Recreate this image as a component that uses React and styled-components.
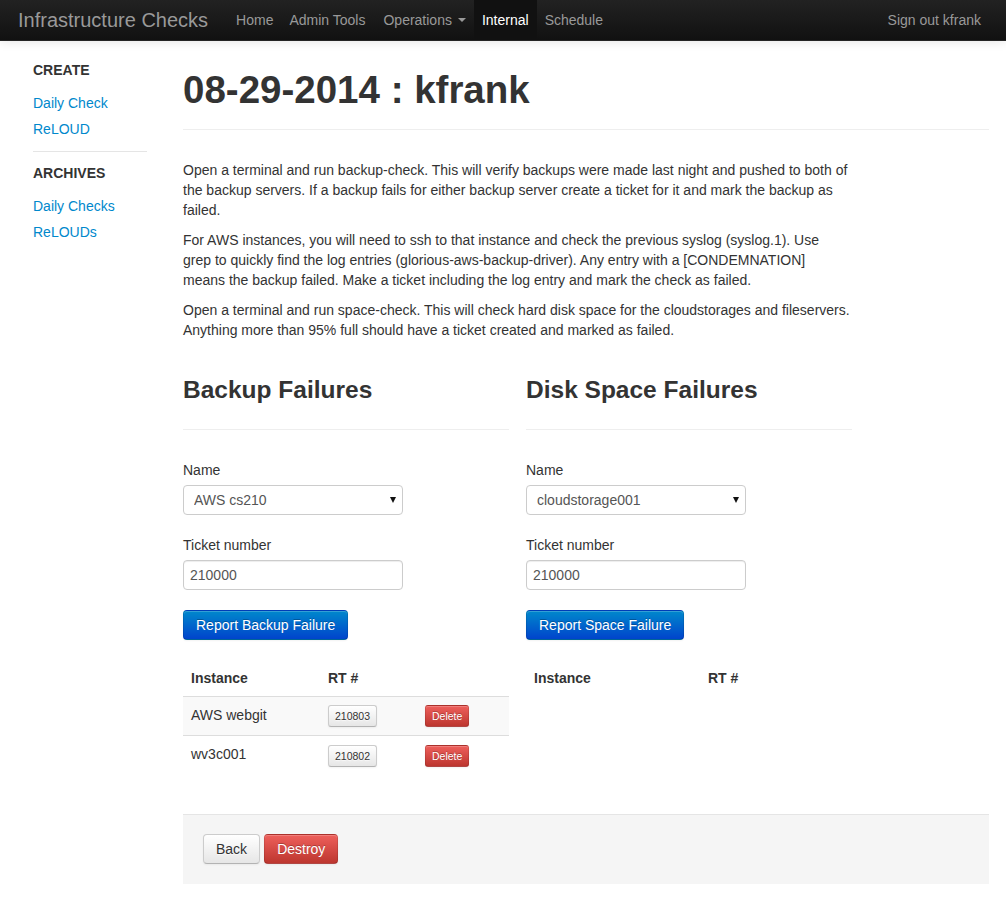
import React from 'react';
import styled, { createGlobalStyle } from 'styled-components';

const Global = createGlobalStyle`
  html, body { margin: 0; padding: 0; background: #fff; }
  body {
    font-family: "Liberation Sans", Helvetica, Arial, sans-serif;
    font-size: 14px;
    line-height: 20px;
    color: #333;
  }
  * { box-sizing: border-box; }
`;

const Navbar = styled.div`
  display: flex;
  align-items: stretch;
  height: 41px;
  padding: 0 17px 0 18px;
  background: linear-gradient(to bottom, #222222, #111111);
  border-bottom: 1px solid #252525;
  box-shadow: 0 1px 10px rgba(0, 0, 0, 0.1);
`;

const Brand = styled.a`
  display: block;
  padding: 10px 20px 10px 0;
  font-size: 20px;
  line-height: 20px;
  color: #999;
  text-decoration: none;
`;

const NavList = styled.ul`
  display: flex;
  list-style: none;
  margin: 0;
  padding: 0;
  margin-left: ${p => (p.$right ? 'auto' : '0')};
`;

const NavItem = styled.li`
  display: block;
`;

const NavLink = styled.a`
  display: flex;
  align-items: flex-start;
  height: 40px;
  padding: 10px 8px 10px ${p => p.$padLeft || 8}px;
  line-height: 20px;
  color: ${p => (p.$active ? '#fff' : '#999')};
  background: ${p => (p.$active ? '#111' : 'transparent')};
  text-decoration: none;
`;

const Caret = styled.b`
  display: inline-block;
  width: 0;
  height: 0;
  margin: 8px 0 0 6px;
  border-top: 4px solid #999;
  border-left: 4px solid transparent;
  border-right: 4px solid transparent;
`;

const Page = styled.div`
  display: flex;
  align-items: flex-start;
  padding: 0 17px 0 33px;
  gap: 36px;
`;

const Sidebar = styled.ul`
  width: 114px;
  flex: none;
  list-style: none;
  margin: 0;
  padding: 16px 0 0;
`;

const SideHeader = styled.li`
  padding: 3px 0;
  margin-bottom: 7px;
  font-weight: bold;
  text-transform: uppercase;
  color: #333;
`;

const SideLink = styled.a`
  display: block;
  padding: 3px 0;
  color: #0088cc;
  text-decoration: none;
`;

const Divider = styled.li`
  height: 1px;
  margin: 9px 0 7px;
  background: #e5e5e5;
  border-bottom: 1px solid #fff;
  box-sizing: content-box;
`;

const Main = styled.div`
  flex: 1;
  display: flex;
  flex-direction: column;
  padding-top: 29px;
`;

const PageHeader = styled.div`
  padding-bottom: 9px;
  border-bottom: 1px solid #eee;
  margin-bottom: ${p => p.$gap || 30}px;
`;

const Title = styled.h1`
  margin: 0 0 10px;
  font-size: 38.5px;
  line-height: 40px;
  font-weight: bold;
  color: #333;
`;

const Intro = styled.div`
  width: 667.5px;
  p { margin: 0 0 10px; }
`;

const Columns = styled.div`
  display: flex;
  align-items: flex-start;
  gap: 17px;
  width: 670px;
  margin-top: 20px;
`;

const Column = styled.div`
  width: 326px;
  flex: none;
`;

const SectionTitle = styled.h3`
  margin: 0 0 10px;
  font-size: 24.5px;
  line-height: 40px;
  font-weight: bold;
  color: #333;
`;

const Field = styled.div`
  margin-bottom: 20px;
`;

const Label = styled.label`
  display: block;
  margin-bottom: 5px;
`;

const SelectWrap = styled.div`
  position: relative;
  width: 220px;
  &::after {
    content: '';
    position: absolute;
    right: 7px;
    top: 12px;
    border-top: 6px solid #111;
    border-left: 3.5px solid transparent;
    border-right: 3.5px solid transparent;
  }
`;

const Select = styled.select`
  appearance: none;
  -webkit-appearance: none;
  display: block;
  width: 220px;
  height: 30px;
  padding: 4px 20px 4px 10px;
  font: inherit;
  color: #555;
  background: #fff;
  border: 1px solid #ccc;
  border-radius: 4px;
`;

const Input = styled.input`
  display: block;
  width: 220px;
  height: 30px;
  padding: 4px 6px;
  font: inherit;
  color: #555;
  background: #fff;
  border: 1px solid #ccc;
  border-radius: 4px;
  box-shadow: inset 0 1px 1px rgba(0, 0, 0, 0.075);
`;

const looks = {
  primary: `
    color: #fff;
    text-shadow: 0 -1px 0 rgba(0,0,0,0.25);
    background: linear-gradient(to bottom, #0088cc, #0044cc);
    border-color: rgba(0,0,0,0.1) rgba(0,0,0,0.1) rgba(0,0,0,0.25);
  `,
  danger: `
    color: #fff;
    text-shadow: 0 -1px 0 rgba(0,0,0,0.25);
    background: linear-gradient(to bottom, #ee5f5b, #bd362f);
    border-color: rgba(0,0,0,0.1) rgba(0,0,0,0.1) rgba(0,0,0,0.25);
  `,
  default: `
    color: #333;
    text-shadow: 0 1px 1px rgba(255,255,255,0.75);
    background: linear-gradient(to bottom, #ffffff, #e6e6e6);
    border-color: #ccc #ccc #b3b3b3;
  `,
};

const Button = styled.button`
  display: inline-block;
  font-family: inherit;
  font-size: ${p => (p.$mini ? '10.5px' : '14px')};
  line-height: 20px;
  padding: ${p => (p.$mini ? '0 6px' : '4px 12px')};
  border: 1px solid;
  border-radius: ${p => (p.$mini ? '3px' : '4px')};
  box-shadow: inset 0 1px 0 rgba(255, 255, 255, 0.2), 0 1px 2px rgba(0, 0, 0, 0.05);
  cursor: pointer;
  vertical-align: middle;
  ${p => looks[p.$look || 'default']}
`;

const Table = styled.table`
  width: 100%;
  table-layout: fixed;
  border-collapse: collapse;
  border-spacing: 0;
  margin: 20px 0;
`;

const Th = styled.th`
  width: ${p => (p.$w ? `${p.$w}px` : 'auto')};
  padding: 8px;
  text-align: left;
  font-weight: bold;
  line-height: 20px;
  vertical-align: bottom;
`;

const Row = styled.tr`
  background: ${p => (p.$striped ? '#f9f9f9' : 'transparent')};
`;

const Td = styled.td`
  padding: 8px;
  line-height: 20px;
  border-top: 1px solid #ddd;
  vertical-align: top;
  text-align: left;
`;

const FormActions = styled.div`
  margin-top: 19px;
  padding: 19px 20px 20px;
  background: #f5f5f5;
  border-top: 1px solid #e5e5e5;
  display: flex;
  gap: 4px;
`;

const backups = [
  { name: 'AWS webgit', rt: '210803' },
  { name: 'wv3c001', rt: '210802' },
];

function FailureForm({ title, options, button, widths, rows }) {
  return (
    <Column>
      <PageHeader>
        <SectionTitle>{title}</SectionTitle>
      </PageHeader>
      <Field>
        <Label>Name</Label>
        <SelectWrap>
          <Select defaultValue={options[0]}>
            {options.map(o => (
              <option key={o}>{o}</option>
            ))}
          </Select>
        </SelectWrap>
      </Field>
      <Field>
        <Label>Ticket number</Label>
        <Input defaultValue="210000" />
      </Field>
      <Button $look="primary">{button}</Button>
      <Table>
        <thead>
          <tr>
            <Th $w={widths[0]}>Instance</Th>
            <Th $w={widths[1]}>RT #</Th>
            <Th />
          </tr>
        </thead>
        <tbody>
          {rows.map((r, i) => (
            <Row key={r.rt} $striped={i % 2 === 0}>
              <Td>{r.name}</Td>
              <Td>
                <Button $mini>{r.rt}</Button>
              </Td>
              <Td>
                <Button $mini $look="danger">Delete</Button>
              </Td>
            </Row>
          ))}
        </tbody>
      </Table>
    </Column>
  );
}

export default function App() {
  return (
    <>
      <Global />
      <Navbar>
        <Brand href="#">Infrastructure Checks</Brand>
        <NavList>
          <NavItem><NavLink href="#">Home</NavLink></NavItem>
          <NavItem><NavLink href="#">Admin Tools</NavLink></NavItem>
          <NavItem><NavLink href="#" $padLeft={10}>Operations<Caret /></NavLink></NavItem>
          <NavItem><NavLink href="#" $active>Internal</NavLink></NavItem>
          <NavItem><NavLink href="#">Schedule</NavLink></NavItem>
        </NavList>
        <NavList $right>
          <NavItem><NavLink href="#">Sign out kfrank</NavLink></NavItem>
        </NavList>
      </Navbar>
      <Page>
        <Sidebar>
          <SideHeader>Create</SideHeader>
          <li><SideLink href="#">Daily Check</SideLink></li>
          <li><SideLink href="#">ReLOUD</SideLink></li>
          <Divider />
          <SideHeader>Archives</SideHeader>
          <li><SideLink href="#">Daily Checks</SideLink></li>
          <li><SideLink href="#">ReLOUDs</SideLink></li>
        </Sidebar>
        <Main>
          <PageHeader>
            <Title>08-29-2014 : kfrank</Title>
          </PageHeader>
          <Intro>
            <p>
              Open a terminal and run backup-check. This will verify backups were made last night and
              pushed to both of the backup servers. If a backup fails for either backup server create a
              ticket for it and mark the backup as failed.
            </p>
            <p>
              For AWS instances, you will need to ssh to that instance and check the previous syslog
              (syslog.1). Use grep to quickly find the log entries (glorious-aws-backup-driver). Any entry
              with a [CONDEMNATION] means the backup failed. Make a ticket including the log entry and mark
              the check as failed.
            </p>
            <p>
              Open a terminal and run space-check. This will check hard disk space for the cloudstorages
              and fileservers. Anything more than 95% full should have a ticket created and marked as
              failed.
            </p>
          </Intro>
          <Columns>
            <FailureForm
              title="Backup Failures"
              options={['AWS cs210', 'AWS webgit', 'wv3c001']}
              button="Report Backup Failure"
              widths={[137, 97]}
              rows={backups}
            />
            <FailureForm
              title="Disk Space Failures"
              options={['cloudstorage001', 'cloudstorage002', 'fileserver001']}
              button="Report Space Failure"
              widths={[174, 100]}
              rows={[]}
            />
          </Columns>
          <FormActions>
            <Button>Back</Button>
            <Button $look="danger">Destroy</Button>
          </FormActions>
        </Main>
      </Page>
    </>
  );
}
